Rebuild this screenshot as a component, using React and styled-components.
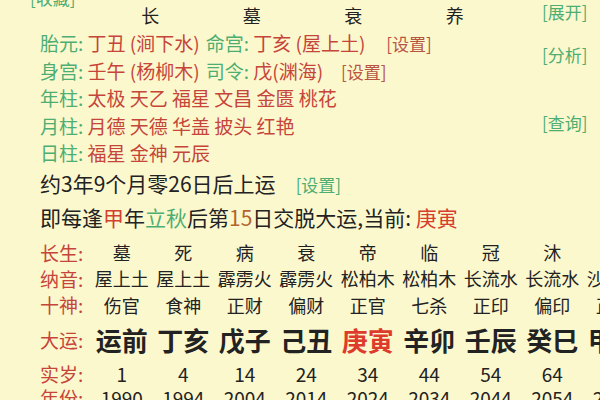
import React from 'react';
import styled, { createGlobalStyle } from 'styled-components';

const BG = '#FCF8CE';
const GREEN = '#4DAE72';
const RED = '#C6453A';
const INK = '#222222';

const GlobalStyle = createGlobalStyle`
  html, body { margin: 0; padding: 0; background: ${BG}; }
  body { font-family: "Noto Sans CJK SC", "Noto Sans", sans-serif; }
`;

const Page = styled.div`
  width: 600px;
  height: 400px;
  overflow: hidden;
  background: ${BG};
  color: ${INK};
`;

const Top = styled.div`
  display: flex;
`;

const TopMain = styled.div`
  flex: 1;
  padding-left: 40px;
  min-width: 0;
`;

const SideCol = styled.div`
  width: 58px;
  display: flex;
  flex-direction: column;
  align-items: flex-start;
`;

const SideLink = styled.div`
  margin-top: ${p => p.$mt}px;
  color: ${GREEN};
  font-size: 17px;
  line-height: 24px;
  white-space: nowrap;
`;

const FavRow = styled.div`
  margin: -12px 0 0 -10px;
  height: 20px;
  line-height: 20px;
  font-size: 17px;
  color: ${GREEN};
`;

const HeadRow = styled.div`
  margin-top: -7px;
  height: 28px;
  padding-left: 59.5px;
  display: grid;
  grid-template-columns: repeat(4, 101.5px);
  font-size: 18px;
  line-height: 28px;
  text-align: center;
`;

const InfoRow = styled.div`
  height: 27.6px;
  line-height: 27.6px;
  font-size: 19px;
  white-space: nowrap;
`;

const Label = styled.span`
  color: ${GREEN};
  margin-left: ${p => p.$ml || 0}px;
`;

const Val = styled.span`
  color: ${p => p.$c || RED};
`;

const Bracket = styled.span`
  color: ${p => p.$c};
  font-size: 17px;
  margin-left: ${p => p.$ml}px;
`;

const TextLine = styled.div`
  height: ${p => p.$h}px;
  line-height: ${p => p.$h}px;
  font-size: 21px;
  white-space: nowrap;
  color: ${INK};
`;

const Lower = styled.div`
  margin-top: 5px;
  padding-left: 40px;
`;

const GridRow = styled.div`
  display: grid;
  grid-template-columns: 51px repeat(9, 61.5px);
  height: ${p => p.$h}px;
  align-items: center;
  white-space: nowrap;
  line-height: 1.1;
`;

const RowLabel = styled.div`
  color: ${RED};
  font-size: 19px;
`;

const Cell = styled.div`
  text-align: center;
  font-size: ${p => p.$fs}px;
  font-weight: ${p => p.$bold ? 700 : 400};
  color: ${p => p.$c || INK};
`;

const changsheng = ['墓', '死', '病', '衰', '帝', '临', '冠', '沐', ''];
const nayin = ['屋上土', '屋上土', '霹雳火', '霹雳火', '松柏木', '松柏木', '长流水', '长流水', '沙中金'];
const shishen = ['伤官', '食神', '正财', '偏财', '正官', '七杀', '正印', '偏印', '正财'];
const dayun = ['运前', '丁亥', '戊子', '己丑', '庚寅', '辛卯', '壬辰', '癸巳', '甲午'];
const ages = ['1', '4', '14', '24', '34', '44', '54', '64', '74'];
const years = ['1990', '1994', '2004', '2014', '2024', '2034', '2044', '2054', '2064'];

function Row({ label, items, fs, h, bold, hi }) {
  return (
    <GridRow $h={h}>
      <RowLabel>{label}:</RowLabel>
      {items.map((t, i) => (
        <Cell key={i} $fs={fs} $bold={bold} $c={hi === i ? '#DD3B2B' : undefined}>{t}</Cell>
      ))}
    </GridRow>
  );
}

export default function App() {
  return (
    <>
      <GlobalStyle />
      <Page>
        <Top>
          <TopMain>
            <FavRow>[收藏]</FavRow>
            <HeadRow>
              <span>长</span><span>墓</span><span>衰</span><span>养</span>
            </HeadRow>
            <InfoRow>
              <Label>胎元:</Label> <Val>丁丑 (涧下水)</Val>
              <Label $ml={6}>命宫:</Label> <Val>丁亥 (屋上土)</Val>
              <Bracket $c="#B85541" $ml={21}>[设置]</Bracket>
            </InfoRow>
            <InfoRow>
              <Label>身宫:</Label> <Val>壬午 (杨柳木)</Val>
              <Label $ml={6}>司令:</Label> <Val>戊(渊海)</Val>
              <Bracket $c="#B85541" $ml={18}>[设置]</Bracket>
            </InfoRow>
            <InfoRow>
              <Label>年柱:</Label> <Val>太极 天乙 福星 文昌 金匮 桃花</Val>
            </InfoRow>
            <InfoRow>
              <Label>月柱:</Label> <Val>月德 天德 华盖 披头 红艳</Val>
            </InfoRow>
            <InfoRow>
              <Label>日柱:</Label> <Val>福星 金神 元辰</Val>
            </InfoRow>
            <TextLine $h={32}>
              约3年9个月零26日后上运<Bracket $c={GREEN} $ml={20}>[设置]</Bracket>
            </TextLine>
            <TextLine $h={36}>
              即每逢<Val $c="#D2402F">甲</Val>年<Val $c={GREEN}>立秋</Val>后第<Val $c="#B5642E">15</Val>日交脱大运,当前: <Val $c="#D63E2E">庚寅</Val>
            </TextLine>
          </TopMain>
          <SideCol>
            <SideLink $mt={0}>[展开]</SideLink>
            <SideLink $mt={19}>[分析]</SideLink>
            <SideLink $mt={44}>[查询]</SideLink>
          </SideCol>
        </Top>
        <Lower>
          <Row label="长生" items={changsheng} fs={18} h={26} />
          <Row label="纳音" items={nayin} fs={18} h={26} />
          <Row label="十神" items={shishen} fs={18} h={27} />
          <Row label="大运" items={dayun} fs={26} h={43} bold hi={4} />
          <Row label="实岁" items={ages} fs={19} h={24} />
          <Row label="年份" items={years} fs={19} h={24} />
        </Lower>
      </Page>
    </>
  );
}
